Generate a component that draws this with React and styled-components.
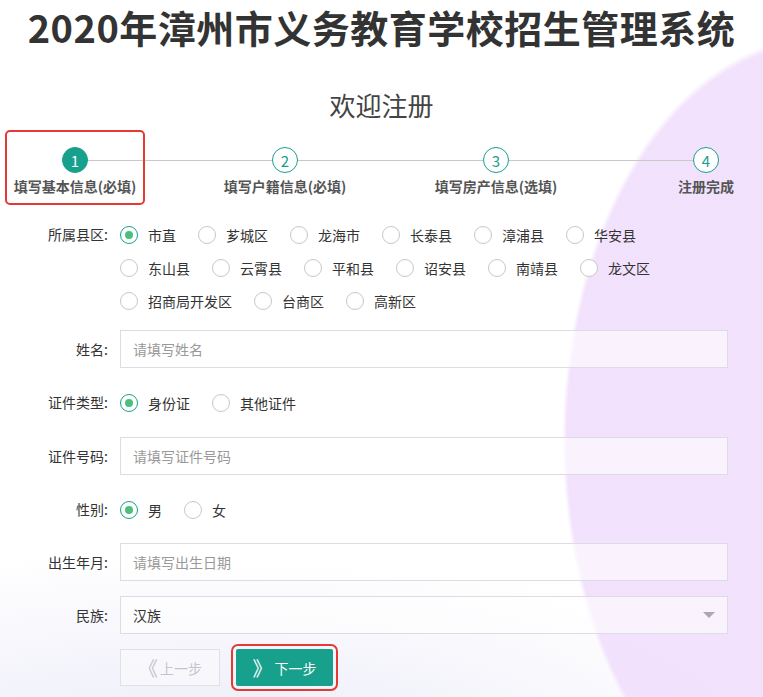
import React from "react";
import styled, { createGlobalStyle } from "styled-components";

const G = createGlobalStyle`
  html,body{margin:0;padding:0;}
  body{font-family:"Microsoft YaHei","Noto Sans CJK SC",sans-serif;color:#333;width:763px;height:697px;overflow:hidden;
    background:
      radial-gradient(ellipse 460px 720px at 820px 440px, rgba(242,224,252,0.95) 55%, rgba(242,224,252,0) 56%),
      radial-gradient(ellipse 900px 300px at 200px 760px, rgba(225,225,245,0.7), rgba(255,255,255,0) 70%),
      #fff;}
`;
const Title = styled.h1`margin:0;padding-top:4px;text-align:center;font-size:38px;font-weight:bold;color:#333;letter-spacing:0.5px;line-height:46px;`;
const Sub = styled.h2`margin:38px 0 0;text-align:center;font-weight:normal;font-size:26px;color:#444;line-height:34px;`;
const Steps = styled.div`position:relative;display:flex;margin:16px 0 0 7px;height:60px;`;
const Line = styled.div`position:absolute;left:71px;right:57px;top:22px;height:1px;background:#c8c8c8;`;
const Step = styled.div`position:relative;display:flex;flex-direction:column;align-items:center;width:${p=>p.w}px;margin-left:${p=>p.ml||0}px;padding-top:9px;
  ${p=>p.boxed&&"outline:2px solid #e53935;outline-offset:0;border-radius:3px;margin-top:-6px;padding-top:15px;height:56px;"}`;
const Circle = styled.div`width:26px;height:26px;box-sizing:border-box;border-radius:50%;display:flex;align-items:center;justify-content:center;font-size:15px;
  background:${p=>p.on?"#17a08c":"#fff"};color:${p=>p.on?"#fff":"#17a08c"};border:1px solid #17a08c;`;
const StepLabel = styled.div`margin-top:3px;font-size:14px;font-weight:bold;color:#555;white-space:nowrap;`;
const Form = styled.div`display:grid;grid-template-columns:108px 608px;column-gap:12px;margin-top:20px;font-size:14px;`;
const Label = styled.div`text-align:right;line-height:${p=>p.lh||33}px;color:#333;margin-bottom:${p=>p.mb||0}px;`;
const Radios = styled.div`display:flex;flex-wrap:wrap;margin-bottom:${p=>p.mb||0}px;`;
const RItem = styled.label`display:flex;align-items:center;height:33px;margin-right:22px;`;
const Dot = styled.span`width:18px;height:18px;box-sizing:border-box;border-radius:50%;border:1px solid ${p=>p.on?"#17a08c":"#c8c8c8"};background:#fff;margin-right:10px;display:flex;align-items:center;justify-content:center;
  &::after{content:"";width:8px;height:8px;border-radius:50%;background:${p=>p.on?"#4cbf7c":"transparent"};}`;
const Input = styled.div`height:38px;box-sizing:border-box;border:1px solid #dcdce4;background:rgba(255,255,255,0.6);padding:0 12px;display:flex;align-items:center;justify-content:space-between;color:${p=>p.ph?"#999":"#333"};margin-bottom:${p=>p.mb||0}px;`;
const Caret = styled.span`width:0;height:0;border-left:6px solid transparent;border-right:6px solid transparent;border-top:6px solid #aaa;`;
const Btns = styled.div`display:flex;gap:16px;align-items:center;`;
const Btn = styled.div`width:${p=>p.w}px;height:37px;box-sizing:border-box;display:flex;align-items:center;justify-content:center;font-size:14px;
  ${p=>p.primary?"background:#17a08c;color:#fff;outline:2px solid #e53935;outline-offset:3px;border-radius:2px;":"border:1px solid #e0e0e6;color:#c4c4cc;background:rgba(255,255,255,0.4);"}`;
const Chev = styled.span`font-size:20px;margin-right:2px;letter-spacing:-6px;padding-right:6px;`;

const R = ({items,on,mb})=>(
  <Radios mb={mb}>{items.map(t=><RItem key={t}><Dot on={t===on}/>{t}</RItem>)}</Radios>
);

export default function App(){
  return <>
    <G/>
    <Title>2020年漳州市义务教育学校招生管理系统</Title>
    <Sub>欢迎注册</Sub>
    <Steps>
      <Line/>
      <Step w={136} boxed><Circle on>1</Circle><StepLabel>填写基本信息(必填)</StepLabel></Step>
      <Step w={130} ml={77}><Circle>2</Circle><StepLabel>填写户籍信息(必填)</StepLabel></Step>
      <Step w={130} ml={81}><Circle>3</Circle><StepLabel>填写房产信息(选填)</StepLabel></Step>
      <Step w={56} ml={117}><Circle>4</Circle><StepLabel>注册完成</StepLabel></Step>
    </Steps>
    <Form>
      <Label>所属县区:</Label>
      <R mb={13} on="市直" items={["市直","芗城区","龙海市","长泰县","漳浦县","华安县","东山县","云霄县","平和县","诏安县","南靖县","龙文区","招商局开发区","台商区","高新区"]}/>
      <Label lh={38} mb={18}>姓名:</Label>
      <Input ph mb={18}>请填写姓名</Input>
      <Label mb={18}>证件类型:</Label>
      <R mb={18} on="身份证" items={["身份证","其他证件"]}/>
      <Label lh={38} mb={18}>证件号码:</Label>
      <Input ph mb={18}>请填写证件号码</Input>
      <Label mb={17}>性别:</Label>
      <R mb={17} on="男" items={["男","女"]}/>
      <Label lh={38} mb={15}>出生年月:</Label>
      <Input ph mb={15}>请填写出生日期</Input>
      <Label lh={38} mb={15}>民族:</Label>
      <Input mb={15}>汉族<Caret/></Input>
      <div/>
      <Btns>
        <Btn w={100}><Chev>《</Chev>上一步</Btn>
        <Btn w={97} primary><Chev>》</Chev>下一步</Btn>
      </Btns>
    </Form>
  </>;
}
